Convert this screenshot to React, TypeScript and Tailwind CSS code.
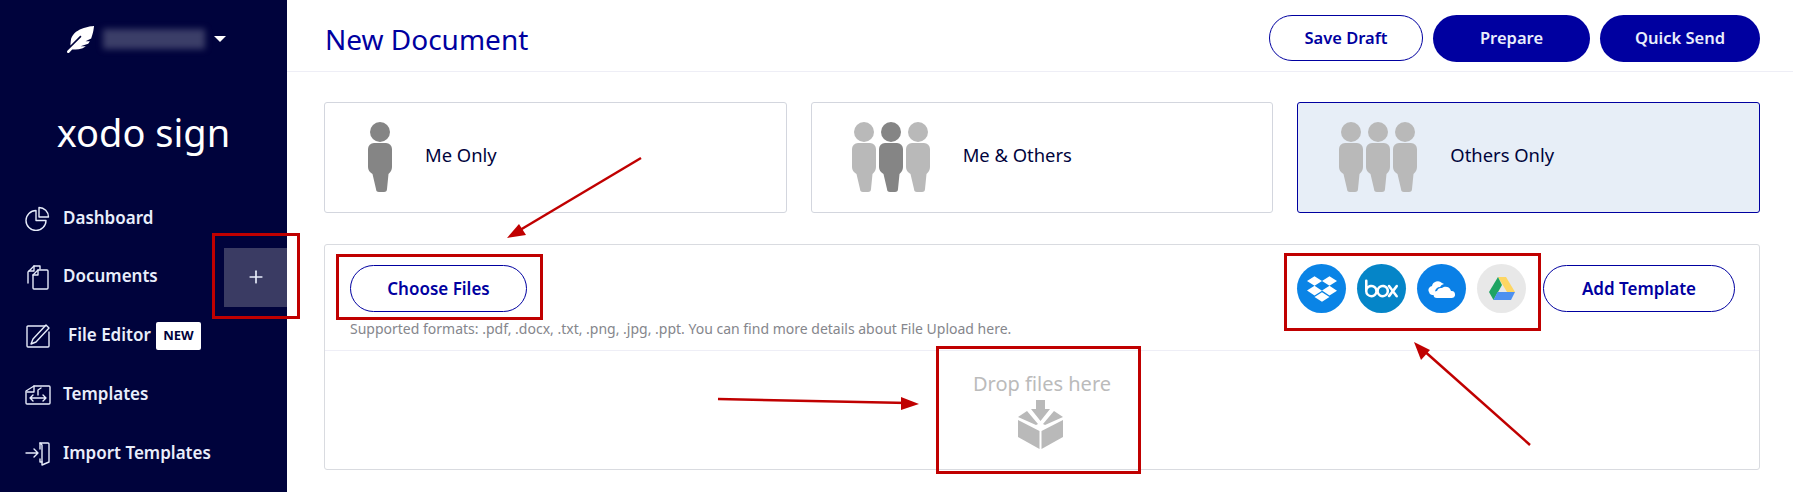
import { FaDropbox, FaFeatherAlt } from 'react-icons/fa';
import { SiBox } from 'react-icons/si';
import { Plus } from 'lucide-react';
import type { ReactNode } from 'react';

const font = "font-['Noto_Sans','Open_Sans',sans-serif]";

function Person({ color }: { color: string }) {
    return (
        <svg width="24" height="70" viewBox="0 0 24 70" fill={color}>
            <circle cx="12" cy="10" r="10" />
            <path d="M6 21h12a6 6 0 0 1 6 6v18c0 3-1.5 5-3.5 7l-1.5 15a3 3 0 0 1-3 3h-5a3 3 0 0 1-3-3L4.5 52C1.5 50 0 48 0 45V27a6 6 0 0 1 6-6z" />
        </svg>
    );
}

function NavIcon({ children }: { children: ReactNode }) {
    return (
        <svg width="26" height="26" viewBox="0 0 26 26" fill="none" stroke="#e6ecfa" strokeWidth="1.4" strokeLinejoin="round" strokeLinecap="round">
            {children}
        </svg>
    );
}

function NavItem({ icon, label, gap, extra }: { icon: ReactNode; label: string; gap: string; extra?: ReactNode }) {
    return (
        <div className="flex h-[58.7px] items-center pl-[25px]">
            {icon}
            <span className={`${gap} pb-[2px] text-[17px] font-semibold text-[#e9eefb]`}>{label}</span>
            {extra}
        </div>
    );
}

function ChoiceCard({ people, label, selected, pad }: { people: string[]; label: string; selected?: boolean; pad: string }) {
    return (
        <div className={`flex h-[111px] items-center gap-[33px] rounded-[3px] border ${pad} ${selected ? 'border-[#0000a0] bg-[#e7eef7]' : 'border-[#d3d6de] bg-white'}`}>
            <div className="flex gap-[3px] pb-[2px]">
                {people.map((c, i) => (
                    <Person key={i} color={c} />
                ))}
            </div>
            <span className="pb-[6px] text-[18.4px] text-[#00033c]">{label}</span>
        </div>
    );
}

function CloudButton({ bg, children }: { bg: string; children: ReactNode }) {
    return (
        <div className={`flex h-[49px] w-[49px] items-center justify-center rounded-full ${bg}`}>
            {children}
        </div>
    );
}

export default function App() {
    const gray = '#858585';
    const light = '#b9b9b9';

    return (
        <div className={`relative flex h-[492px] w-[1793px] overflow-hidden bg-white ${font}`}>
            <aside className="flex w-[287px] shrink-0 flex-col bg-[#00033c]">
                <div className="flex h-[78px] items-center pl-[67px]">
                    <FaFeatherAlt className="text-[27px] text-white" />
                    <div className="ml-[9px] h-[20px] w-[102px] bg-[#3b3e68] blur-[3px]" />
                    <div className="ml-[9px] h-0 w-0 border-x-[6px] border-t-[6px] border-x-transparent border-t-white" />
                </div>
                <div className="flex h-[111px] items-center justify-center pb-[2px] text-[38px] text-white">
                    xodo sign
                </div>
                <nav className="flex flex-col">
                    <NavItem
                        label="Dashboard"
                        gap="ml-[12px]"
                        icon={
                            <NavIcon>
                                <path d="M11 5.5a10 10 0 1 0 10 10H11z" />
                                <path d="M14 2.5a9.5 9.5 0 0 1 9.5 9.5H14z" />
                            </NavIcon>
                        }
                    />
                    <div className="flex h-[59px] items-center justify-between pl-[25px]">
                        <div className="flex items-center">
                            <NavIcon>
                                <path d="M3 19V8l6-6h6v3" />
                                <path d="M9 2v5H4" />
                                <path d="M13 6h9a1 1 0 0 1 1 1v17a1 1 0 0 1-1 1H9a1 1 0 0 1-1-1V11z" />
                                <path d="M13 6v5H8" />
                            </NavIcon>
                            <span className="ml-[12px] pb-[2px] text-[17px] font-semibold text-[#e9eefb]">Documents</span>
                        </div>
                        <div className="flex h-[59px] w-[63px] items-center justify-center bg-[#3a3b63]">
                            <Plus size={20} strokeWidth={2} className="text-[#e9eefb]" />
                        </div>
                    </div>
                    <NavItem
                        label="File Editor"
                        gap="ml-[17px]"
                        extra={
                            <span className="ml-[5px] flex h-[28px] w-[45px] items-center justify-center rounded-[2px] bg-white text-[13px] font-bold text-[#00033c]">
                                NEW
                            </span>
                        }
                        icon={
                            <NavIcon>
                                <path d="M20 3H3a1 1 0 0 0-1 1v19a1 1 0 0 0 1 1h20a1 1 0 0 0 1-1V9" />
                                <path d="M21 2l3 3L11 19l-5 2 2-5z" />
                            </NavIcon>
                        }
                    />
                    <NavItem
                        label="Templates"
                        gap="ml-[12px]"
                        icon={
                            <NavIcon>
                                <path d="M9 4h15a1 1 0 0 1 1 1v16a1 1 0 0 1-1 1H2a1 1 0 0 1-1-1V9z" />
                                <path d="M9 4v6H2" />
                                <path d="M5 16h16M8 13l-3 3 3 3M18 13l3 3-3 3" />
                                <path d="M13 13V8l3-2" />
                            </NavIcon>
                        }
                    />
                    <NavItem
                        label="Import Templates"
                        gap="ml-[12px]"
                        icon={
                            <NavIcon>
                                <path d="M1 13h12M9 9l4 4-4 4" />
                                <path d="M15 3h8a1 1 0 0 1 1 1v18l-7 3V5z" />
                                <path d="M15 3v6M15 19v3h2" />
                            </NavIcon>
                        }
                    />
                </nav>
            </aside>

            <main className="flex min-w-0 flex-1 flex-col">
                <header className="flex h-[72px] shrink-0 items-center justify-between border-b border-[#eeeef6] pl-[38px] pr-[33px] pt-[6px]">
                    <h1 className="text-[28px] text-[#0000a0]">New Document</h1>
                    <div className="flex gap-[10px]">
                        <button className="h-[46px] w-[154px] rounded-full border border-[#0000a0] bg-white text-[16.5px] font-semibold text-[#0000a0]">
                            Save Draft
                        </button>
                        <button className="h-[47px] w-[157px] rounded-full bg-[#0000a0] text-[16.5px] font-semibold text-[#e9eefb]">
                            Prepare
                        </button>
                        <button className="h-[47px] w-[160px] rounded-full bg-[#0000a0] text-[16.5px] font-semibold text-[#e9eefb]">
                            Quick Send
                        </button>
                    </div>
                </header>

                <div className="pl-[37px] pr-[33px] pt-[30px]">
                    <div className="grid grid-cols-3 gap-[24px]">
                        <ChoiceCard people={[gray]} label="Me Only" pad="pl-[43px]" />
                        <ChoiceCard people={[light, gray, light]} label="Me & Others" pad="pl-[40px]" />
                        <ChoiceCard people={[light, light, light]} label="Others Only" pad="pl-[41px]" selected />
                    </div>

                    <section className="mt-[31px] h-[226px] rounded-[3px] border border-[#d9dbe0] bg-white">
                        <div className="h-[106px] border-b border-[#eeeef6] pl-[25px] pr-[24px] pt-[19px]">
                            <div className="flex items-center justify-between">
                                <button className="h-[47px] w-[177px] rounded-full border border-[#0000a0] text-[17px] font-semibold text-[#0000a0]">
                                    Choose Files
                                </button>
                                <div className="flex items-center">
                                    <div className="flex gap-[11px]">
                                        <CloudButton bg="bg-[#0a84e6]">
                                            <FaDropbox className="text-[30px] text-white" />
                                        </CloudButton>
                                        <CloudButton bg="bg-[#0585c8]">
                                            <SiBox className="text-[33px] text-white" />
                                        </CloudButton>
                                        <CloudButton bg="bg-[#0a80e6]">
                                            <svg width="27" height="18" viewBox="0 0 27 18" fill="white">
                                                <path d="M1 12a4 4 0 0 1 3-6 6 6 0 0 1 10-3 5 5 0 0 1 2 1 6 6 0 0 0-4 3 5 5 0 0 0-5 5 4 4 0 0 0 .5 3H4a3.500 3.500 0 0 1-3-3z" />
                                                <path d="M9 18a3.500 3.500 0 0 1 0-7 4.500 4.500 0 0 1 5-3 5.500 5.500 0 0 1 9 3 3.500 3.500 0 0 1 1 7z" />
                                            </svg>
                                        </CloudButton>
                                        <CloudButton bg="bg-[#e8e8e8]">
                                            <svg width="26" height="24" viewBox="0 0 26 24">
                                                <path d="M9 0h8l9 15h-8z" fill="#fdd663" />
                                                <path d="M9 0L0 15l4.500 8L13 8z" fill="#1fa463" />
                                                <path d="M8.500 15H26l-4 8H4.500z" fill="#4d90f0" />
                                            </svg>
                                        </CloudButton>
                                    </div>
                                    <button className="ml-[17px] h-[47px] w-[192px] rounded-full border border-[#0000a0] text-[17px] font-semibold text-[#0000a0]">
                                        Add Template
                                    </button>
                                </div>
                            </div>
                            <p className="mt-[5px] text-[14px] text-[#85868c]">
                                Supported formats: .pdf, .docx, .txt, .png, .jpg, .ppt. You can find more details about File Upload here.
                            </p>
                        </div>
                        <div className="flex flex-col items-center pt-[19px]">
                            <span className="text-[20px] leading-[27px] text-[#bbbbbb]">Drop files here</span>
                            <svg className="mr-[4px] mt-[3px]" width="45" height="49" viewBox="0 0 45 49" fill="#b9b9b9">
                                <path d="M18 0h9v9h5L22.500 21 13 9h5z" />
                                <path d="M0 20l21.500 11v18L0 37z" />
                                <path d="M45 20L23.500 31v18L45 37z" />
                                <path d="M0 17l9-6 11 13-2 1z" />
                                <path d="M45 17l-9-6-11 13 2 1z" />
                            </svg>
                        </div>
                    </section>
                </div>
            </main>

            {/* annotations drawn on top of the screenshot */}
            <div className="pointer-events-none absolute left-[212px] top-[233px] h-[86px] w-[88px] border-[3px] border-[#c00000]" />
            <div className="pointer-events-none absolute left-[336px] top-[254px] h-[66px] w-[207px] border-[3px] border-[#c00000]" />
            <div className="pointer-events-none absolute left-[1284px] top-[253px] h-[78px] w-[257px] border-[3px] border-[#c00000]" />
            <div className="pointer-events-none absolute left-[936px] top-[346px] h-[128px] w-[205px] border-[3px] border-[#c00000]" />
            <svg className="pointer-events-none absolute left-0 top-0" width="1793" height="492" fill="#c00000" stroke="#c00000" strokeWidth="2.5">
                <path d="M641 158L515 233" />
                <path d="M507 238l12-14 7 11z" stroke="none" />
                <path d="M718 399l190 4" />
                <path d="M919 404l-18-7v13z" stroke="none" />
                <path d="M1530 445L1422 349" />
                <path d="M1414 342l7 18 9-10z" stroke="none" />
            </svg>
        </div>
    );
}
